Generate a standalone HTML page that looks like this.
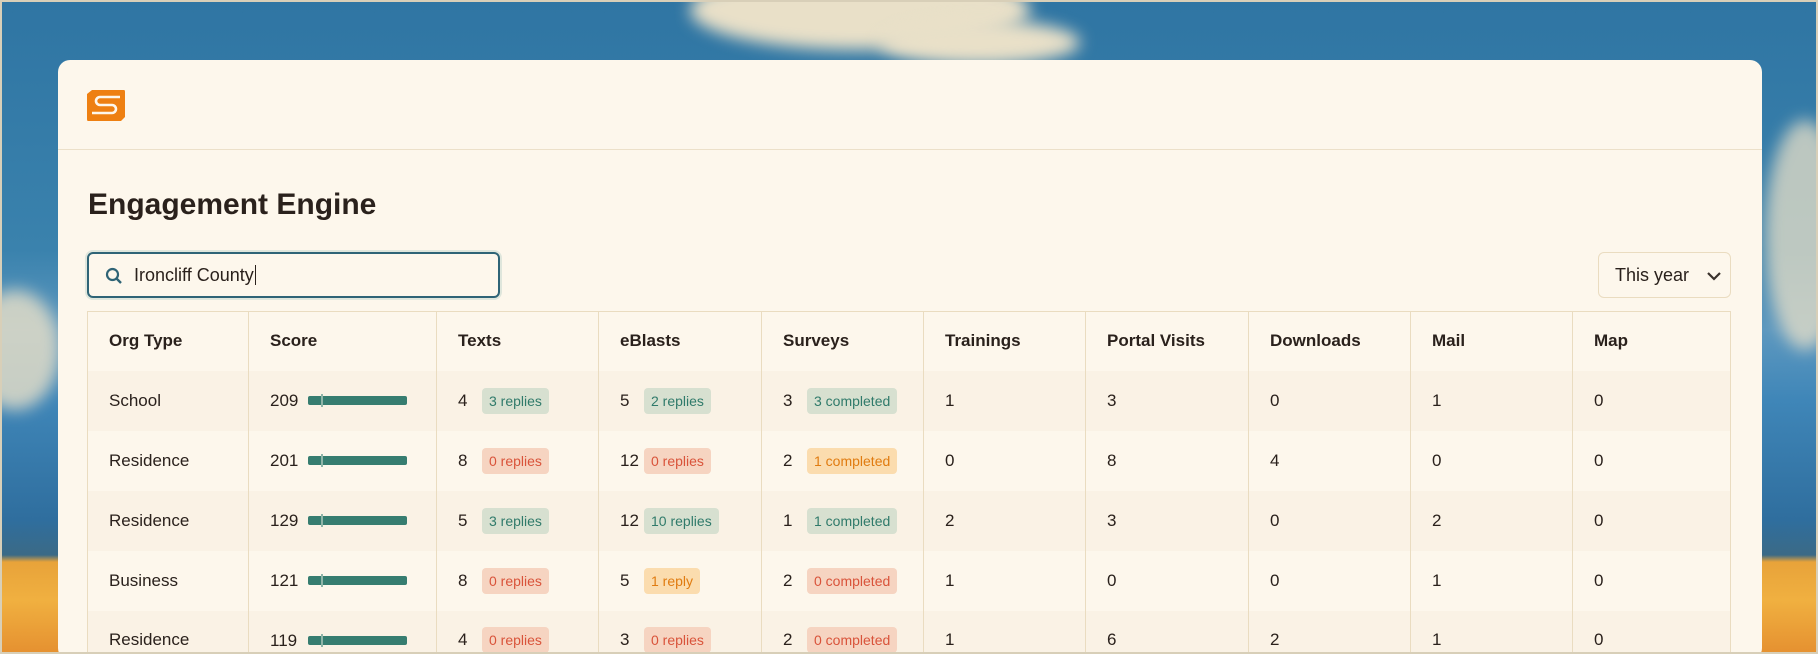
<!DOCTYPE html>
<html><head><meta charset="utf-8"><style>
*{box-sizing:border-box;margin:0;padding:0}
html{width:1818px;height:654px;overflow:hidden}
body{width:1818px;height:654px;overflow:hidden;position:relative;font-family:"Liberation Sans",sans-serif;color:#2a211c;
background:linear-gradient(180deg,#2f75a3 0px,#3a82ad 250px,#5d98bf 330px,#3f86b8 400px,#2f6e9e 520px,#3b6a86 555px,#e8a33a 562px,#f0b040 600px,#e59030 654px);}
.cloud{position:absolute;border-radius:50%;background:#e9e0c8;filter:blur(8px)}
.frame{position:absolute;inset:0;border:2px solid #d8cfb8;pointer-events:none}
.card{position:absolute;left:58px;top:60px;width:1704px;height:600px;background:#fdf7ec;border-radius:12px;overflow:hidden}
.hdr{height:90px;border-bottom:1px solid #ece0c9}
.logo{position:absolute;left:29px;top:30px}
h1{position:absolute;left:30px;top:128px;font-size:30px;font-weight:bold;color:#2a211c}
.search{position:absolute;left:29px;top:192px;width:413px;height:46px;border:2px solid #2f6476;border-radius:6px;box-shadow:0 0 0 2px #dfe6dc}
.search span{position:absolute;left:45px;top:11px;font-size:18px;color:#2a211c}
.dd{position:absolute;left:1540px;top:192px;width:133px;height:46px;border:1px solid #eadcc0;border-radius:6px;font-size:18px;padding:12px 0 0 16px}
table{position:absolute;left:29px;top:251px;width:1644px;border-collapse:collapse;border:1px solid #eadcc0;font-size:17px}
td,th{height:60px;text-align:left;padding:0 0 0 21px;border-left:1px solid #eadcc0;white-space:nowrap;vertical-align:middle}
th{font-weight:bold;font-size:17px;height:59px}
tr.s td{background:#faf2e5}
.sc{display:inline-block;width:38px;vertical-align:middle}
.bar{display:inline-block;vertical-align:middle;width:99px;height:9px;background:#367d70;border-radius:2px;position:relative}
.bar:after{content:"";position:absolute;left:13px;top:-2px;width:2px;height:13px;background:#8fb5a8}
.n{display:inline-block;width:24px;vertical-align:middle}
.b{display:inline-block;font-size:14px;padding:5px 7px;border-radius:4px;vertical-align:middle}
.g{background:#d7e0d0;color:#2f7a6a}.r{background:#f6d4c1;color:#d9533a}.o{background:#fbdcae;color:#e07b10}
</style></head><body>
<div class="cloud" style="left:690px;top:-30px;width:340px;height:80px"></div>
<div class="cloud" style="left:880px;top:20px;width:200px;height:45px"></div>
<div class="cloud" style="left:-30px;top:290px;width:90px;height:120px;opacity:.8"></div>
<div class="cloud" style="left:1765px;top:120px;width:80px;height:230px;opacity:.75"></div>
<div class="card">
<div class="hdr"></div>
<svg class="logo" width="38" height="31" viewBox="0 0 38 31"><path d="M5 0H37Q38 0 38 2V27L34 31H1Q0 31 0 29V4Z" fill="#ee8012"/><path d="M33 7H13a4 4 0 0 0 0 8H25a4 4 0 0 1 0 8H5" fill="none" stroke="#fdf7ec" stroke-width="2.6"/></svg>
<h1>Engagement Engine</h1>
<div class="search"><svg style="position:absolute;left:16px;top:13px" width="18" height="18" viewBox="0 0 18 18"><circle cx="7.5" cy="7.5" r="5.5" fill="none" stroke="#2f6476" stroke-width="2.2"/><path d="M11.5 11.5L16 16" stroke="#2f6476" stroke-width="2.4"/></svg><span>Ironcliff County<span style="border-left:1.5px solid #2a211c;position:static;margin-left:1px"></span></span></div>
<div class="dd">This year <svg style="margin-left:12px;vertical-align:middle" width="16" height="10" viewBox="0 0 16 10"><path d="M2 2l6 6 6-6" fill="none" stroke="#3a322c" stroke-width="2.2"/></svg></div>
<table>
<colgroup><col style="width:161px"><col style="width:188px"><col style="width:162px"><col style="width:163px"><col style="width:162px"><col style="width:162px"><col style="width:163px"><col style="width:162px"><col style="width:162px"><col></colgroup>
<tr><th style="border-left:none">Org Type</th><th>Score</th><th>Texts</th><th>eBlasts</th><th>Surveys</th><th>Trainings</th><th>Portal Visits</th><th>Downloads</th><th>Mail</th><th>Map</th></tr>
<tr class="s"><td style="border-left:none">School</td><td><span class="sc">209</span><span class="bar"></span></td><td><span class="n">4</span><span class="b g">3 replies</span></td><td><span class="n">5</span><span class="b g">2 replies</span></td><td><span class="n">3</span><span class="b g">3 completed</span></td><td>1</td><td>3</td><td>0</td><td>1</td><td>0</td></tr>
<tr><td style="border-left:none">Residence</td><td><span class="sc">201</span><span class="bar"></span></td><td><span class="n">8</span><span class="b r">0 replies</span></td><td><span class="n">12</span><span class="b r">0 replies</span></td><td><span class="n">2</span><span class="b o">1 completed</span></td><td>0</td><td>8</td><td>4</td><td>0</td><td>0</td></tr>
<tr class="s"><td style="border-left:none">Residence</td><td><span class="sc">129</span><span class="bar"></span></td><td><span class="n">5</span><span class="b g">3 replies</span></td><td><span class="n">12</span><span class="b g">10 replies</span></td><td><span class="n">1</span><span class="b g">1 completed</span></td><td>2</td><td>3</td><td>0</td><td>2</td><td>0</td></tr>
<tr><td style="border-left:none">Business</td><td><span class="sc">121</span><span class="bar"></span></td><td><span class="n">8</span><span class="b r">0 replies</span></td><td><span class="n">5</span><span class="b o">1 reply</span></td><td><span class="n">2</span><span class="b r">0 completed</span></td><td>1</td><td>0</td><td>0</td><td>1</td><td>0</td></tr>
<tr class="s"><td style="border-left:none">Residence</td><td><span class="sc">119</span><span class="bar"></span></td><td><span class="n">4</span><span class="b r">0 replies</span></td><td><span class="n">3</span><span class="b r">0 replies</span></td><td><span class="n">2</span><span class="b r">0 completed</span></td><td>1</td><td>6</td><td>2</td><td>1</td><td>0</td></tr>
</table>
</div>
<div class="frame"></div>
</body></html>
